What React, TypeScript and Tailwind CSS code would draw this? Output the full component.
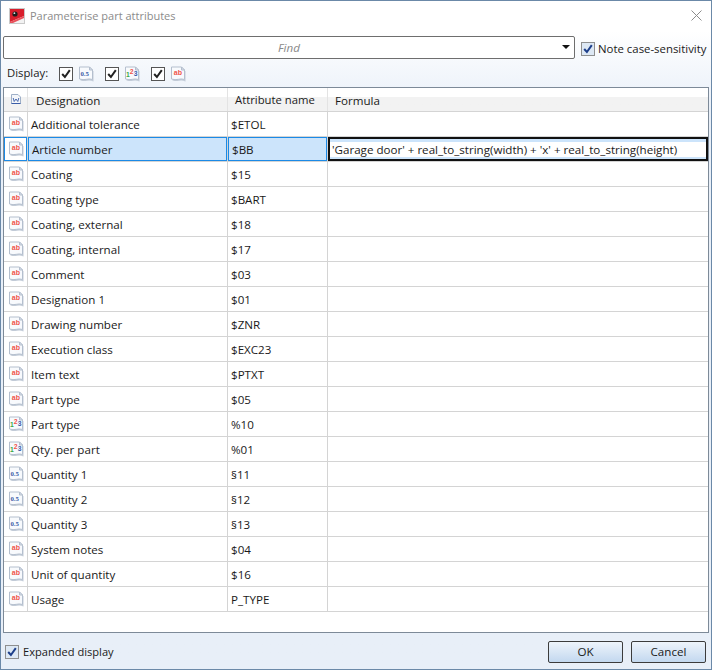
type Kind = "text" | "real" | "int";

const rows: { kind: Kind; name: string; attr: string }[] = [
  { kind: "text", name: "Additional tolerance", attr: "$ETOL" },
  { kind: "text", name: "Article number", attr: "$BB" },
  { kind: "text", name: "Coating", attr: "$15" },
  { kind: "text", name: "Coating type", attr: "$BART" },
  { kind: "text", name: "Coating, external", attr: "$18" },
  { kind: "text", name: "Coating, internal", attr: "$17" },
  { kind: "text", name: "Comment", attr: "$03" },
  { kind: "text", name: "Designation 1", attr: "$01" },
  { kind: "text", name: "Drawing number", attr: "$ZNR" },
  { kind: "text", name: "Execution class", attr: "$EXC23" },
  { kind: "text", name: "Item text", attr: "$PTXT" },
  { kind: "text", name: "Part type", attr: "$05" },
  { kind: "int", name: "Part type", attr: "%10" },
  { kind: "int", name: "Qty. per part", attr: "%01" },
  { kind: "real", name: "Quantity 1", attr: "§11" },
  { kind: "real", name: "Quantity 2", attr: "§12" },
  { kind: "real", name: "Quantity 3", attr: "§13" },
  { kind: "text", name: "System notes", attr: "$04" },
  { kind: "text", name: "Unit of quantity", attr: "$16" },
  { kind: "text", name: "Usage", attr: "P_TYPE" },
];

function AttrIcon({ kind }: { kind: Kind }) {
  return (
    <svg width="15" height="16" viewBox="0 0 15 16" className="block shrink-0">
      <path d="M1.5 14.5 Q5 15.5 8 14.8 Q11 14 14.5 15.5 V5 H13 V13 H1.5 Z" fill="#c3ccd8" />
      <path
        d="M0.5 1 H10.5 L13.5 4 V13.5 Q10.5 12.5 7.5 13.3 Q4 14.2 0.5 13 Z"
        fill="#f8fafd"
        stroke="#b4bfce"
      />
      <path d="M10.5 1 V4 H13.5 Z" fill="#dfe5ee" stroke="#b4bfce" />
      {kind === "text" && (
        <text x="2.8" y="8.8" fontSize="7" fontWeight="700" fill="#f0544a" fontFamily="'Liberation Sans', sans-serif">
          ab
        </text>
      )}
      {kind === "real" && (
        <text x="1.4" y="9.5" fontSize="6.8" fontWeight="700" fill="#3a5aa8" fontFamily="'Liberation Serif', serif">
          0.5
        </text>
      )}
      {kind === "int" && (
        <text fontSize="6.8" fontWeight="700" fontFamily="'Liberation Sans', sans-serif">
          <tspan x="1" y="10.5" fill="#3aa844">1</tspan>
          <tspan x="4.8" y="8" fill="#f0544a">2</tspan>
          <tspan x="8.8" y="10" fill="#3a5aa8">3</tspan>
        </text>
      )}
    </svg>
  );
}

function Check({ color = "#222" }: { color?: string }) {
  return (
    <svg width="10" height="10" viewBox="0 0 10 10" className="block">
      <path d="M1.2 5 L3.9 8 L8.8 1.2" fill="none" stroke={color} strokeWidth="2" />
    </svg>
  );
}

function DisplayToggle({ kind }: { kind: Kind }) {
  return (
    <div className="flex items-center gap-[6px]">
      <span className="flex h-[14px] w-[14px] items-center justify-center border border-[#555] bg-white">
        <Check />
      </span>
      <AttrIcon kind={kind} />
    </div>
  );
}

function BlueCheck() {
  return (
    <span className="flex h-[14px] w-[14px] shrink-0 items-center justify-center border border-[#8e8f8f] bg-[#dde8f4]">
      <Check color="#1d3f8a" />
    </span>
  );
}

function Row({ kind, name, attr, selected }: { kind: Kind; name: string; attr: string; selected: boolean }) {
  const cell = selected ? "h-full border border-[#1b8ae6]" : "h-full";
  return (
    <div className="grid h-[25px] shrink-0 grid-cols-[24px_200px_100px_1fr] border-b border-[#d4d4d4]">
      <div className="border-r border-[#d4d4d4]">
        <div className={`flex items-center justify-center pl-[1px] ${cell}`}>
          <AttrIcon kind={kind} />
        </div>
      </div>
      <div className="border-r border-[#d4d4d4]">
        <div className={`flex items-center pl-[3px] pt-[2px] ${cell} ${selected ? "bg-[#cce4fb]" : ""}`}>{name}</div>
      </div>
      <div className="border-r border-[#d4d4d4]">
        <div className={`flex items-center pl-[3px] pt-[2px] ${cell} ${selected ? "bg-[#cce4fb]" : ""}`}>{attr}</div>
      </div>
      <div>
        {selected && (
          <div className="flex h-full items-center border-2 border-[#111] bg-[#cce4fb]">
            <div className="flex h-[15px] w-full items-center bg-white pl-[2px] pt-[1px]">
              'Garage door' + real_to_string(width) + 'x' + real_to_string(height)
            </div>
          </div>
        )}
      </div>
    </div>
  );
}

export default function App() {
  return (
    <div
      className="flex h-[670px] w-[712px] flex-col border border-[#6b89a8] bg-gradient-to-b from-white from-[30px] to-[#e8eff8] to-[110px] text-[11.6px] text-[#1a1a1a]"
      style={{ fontFamily: "'Open Sans', 'Noto Sans', sans-serif" }}
    >
      <div className="flex h-[35px] shrink-0 items-start pl-[8px] pr-[9px] pt-[7px]">
        <svg width="16" height="16" viewBox="0 0 16 16" className="mr-[5px] shrink-0">
          <rect x="0.5" y="0.5" width="15" height="15" fill="#f2f2f2" stroke="#c9c9c9" />
          <path d="M1 1 H15 V8 L1 14 Z" fill="#d81e2c" />
          <path d="M1 14 L15 8 V10 L4 15 H1 Z" fill="#e8505a" />
          <circle cx="6" cy="6" r="2.6" fill="#1d1d1d" />
          <circle cx="5.4" cy="5.2" r="0.9" fill="#ddd" />
        </svg>
        <span className="text-[11px] leading-[16px] text-[#8b8b8b]">Parameterise part attributes</span>
        <svg width="11" height="11" viewBox="0 0 11 11" className="ml-auto mt-[2px]">
          <path d="M0.5 0.5 L10.5 10.5 M10.5 0.5 L0.5 10.5" stroke="#8c8c8c" fill="none" />
        </svg>
      </div>

      <div className="flex h-[24px] shrink-0 items-start pl-[2px]">
        <div className="relative flex h-[23px] w-[572px] shrink-0 items-center rounded-[2px] border border-[#6e6e6e] bg-white">
          <span className="w-full text-center italic text-[#8a8a8a]">Find</span>
          <span className="absolute right-[4px] top-[8px] h-0 w-0 border-x-[4px] border-t-[4px] border-x-transparent border-t-[#111]" />
        </div>
        <div className="ml-[6px] mt-[4px] flex items-center gap-[3px] whitespace-nowrap">
          <BlueCheck />
          <span className="text-[11.4px]">Note case-sensitivity</span>
        </div>
      </div>

      <div className="flex h-[27px] shrink-0 items-center pl-[6px]">
        <span className="w-[52px] text-[11.3px]">Display:</span>
        <div className="flex items-center gap-[11px]">
          <DisplayToggle kind="real" />
          <DisplayToggle kind="int" />
          <DisplayToggle kind="text" />
        </div>
      </div>

      <div className="mx-[2px] flex min-h-0 flex-1 flex-col border border-[#7d8a98] bg-white">
        <div className="grid h-[24px] shrink-0 grid-cols-[24px_200px_100px_1fr] border-b border-[#d4d4d4] bg-gradient-to-b from-white from-[40%] to-[#f2f2f2] to-[40%]">
          <div className="flex items-center justify-center border-r border-[#e3e3e3]">
            <svg width="10" height="11" viewBox="0 0 10 11">
              <path d="M0.5 0.5 H7 L9.5 3 V9.5 H0.5 Z" fill="#f4f6fa" stroke="#9fb0c8" />
              <path d="M2.2 4 L3.2 7.5 L5 5 L6.8 7.5 L7.8 4" fill="none" stroke="#3a5da8" strokeWidth="0.9" />
              <path d="M0.5 9.5 H9.5" stroke="#3a5da8" />
            </svg>
          </div>
          <div className="flex items-center border-r border-[#e3e3e3] pl-[8px] pt-[2px]">Designation</div>
          <div className="flex items-center border-r border-[#e3e3e3] pl-[7px] pt-[2px] text-[11.3px]">Attribute name</div>
          <div className="flex items-center pl-[7px] pt-[2px]">Formula</div>
        </div>
        {rows.map((r, i) => (
          <Row key={i} kind={r.kind} name={r.name} attr={r.attr} selected={i === 1} />
        ))}
      </div>

      <div className="flex h-[36px] shrink-0 items-center pl-[4px] pr-[5px] pt-[2px]">
        <BlueCheck />
        <span className="ml-[4px] text-[11.1px]">Expanded display</span>
        <div className="ml-auto flex gap-[8px]">
          <button className="h-[22px] w-[75px] rounded-[2px] border border-[#3c3c3c] bg-gradient-to-b from-[#eef4fb] to-[#c3d8ef] text-center">
            OK
          </button>
          <button className="h-[22px] w-[75px] rounded-[2px] border border-[#3c3c3c] bg-gradient-to-b from-[#eef4fb] to-[#c3d8ef] text-center">
            Cancel
          </button>
        </div>
      </div>
    </div>
  );
}
